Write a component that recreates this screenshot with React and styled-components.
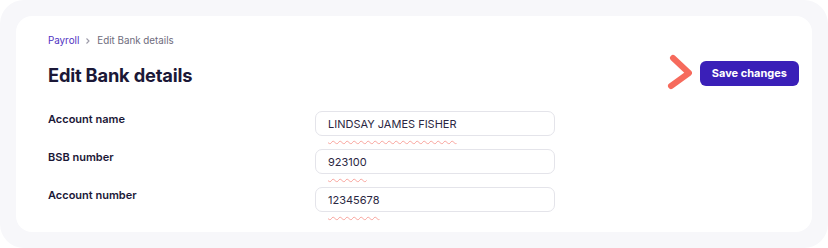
import React from 'react';
import styled, { createGlobalStyle } from 'styled-components';

const GlobalStyle = createGlobalStyle`
  html, body {
    margin: 0;
    padding: 0;
    background: #ffffff;
  }
  body {
    font-family: Inter, 'Liberation Sans', sans-serif;
    -webkit-font-smoothing: antialiased;
  }
`;

const Frame = styled.div`
  width: 828px;
  height: 248px;
  box-sizing: border-box;
  padding: 16px;
  background: #f7f7fa;
  border-radius: 24px;
`;

const Card = styled.div`
  height: 100%;
  box-sizing: border-box;
  background: #ffffff;
  border-radius: 16px;
  padding: 18px 13px 0 32px;
`;

const Breadcrumb = styled.nav`
  display: flex;
  align-items: center;
  gap: 4px;
  font-size: 9.8px;
  line-height: 14px;
  color: #6e6c7c;
`;

const Crumb = styled.span`
  color: ${(p) => (p.active ? '#4f32c2' : '#6e6c7c')};
`;

const Header = styled.div`
  display: flex;
  align-items: center;
  justify-content: space-between;
  margin-top: 12px;
  height: 26px;
`;

const Title = styled.h1`
  margin: 0;
  margin-top: 3px;
  font-size: 18.3px;
  font-weight: 700;
  letter-spacing: -0.2px;
  color: #1b1837;
`;

const Actions = styled.div`
  display: flex;
  align-items: center;
  gap: 8px;
`;

const SaveButton = styled.button`
  height: 25px;
  padding: 0 12px;
  border: none;
  border-radius: 6px;
  background: #3a1fb8;
  color: #ffffff;
  font-family: Inter, 'Liberation Sans', sans-serif;
  font-size: 11px;
  font-weight: 700;
  cursor: pointer;
`;

const Form = styled.div`
  display: flex;
  flex-direction: column;
  gap: 13px;
  margin-top: 25px;
`;

const Row = styled.div`
  display: grid;
  grid-template-columns: 267px 240px;
  align-items: start;
`;

const Label = styled.label`
  padding-top: 1px;
  font-size: 11px;
  line-height: 15px;
  font-weight: 600;
  color: #1b1837;
`;

const Field = styled.div`
  height: 25px;
  box-sizing: border-box;
  display: flex;
  align-items: center;
  padding: 0 12px;
  border: 1px solid #e4e4ea;
  border-radius: 7px;
  font-size: 11px;
  color: #2a2742;
`;

const Value = styled.span`
  text-decoration: underline wavy rgba(244, 98, 86, 0.55);
  text-decoration-thickness: 1px;
  text-underline-offset: 12px;
`;

const Arrow = () => (
  <svg width="26" height="38" viewBox="0 0 26 38">
    <path
      d="M7 4 L23 19 L5 32"
      fill="none"
      stroke="#f66a5c"
      strokeWidth="6"
      strokeLinecap="round"
      strokeLinejoin="round"
    />
  </svg>
);

const ChevronRight = () => (
  <svg width="10" height="8" viewBox="0 0 10 8">
    <path d="M3.5 1.5 L6 4 L3.5 6.5" fill="none" stroke="#9c9aa8" strokeWidth="1.1" />
  </svg>
);

const fields = [
  { label: 'Account name', value: 'LINDSAY JAMES FISHER' },
  { label: 'BSB number', value: '923100' },
  { label: 'Account number', value: '12345678' },
];

export default function App() {
  return (
    <>
      <GlobalStyle />
      <Frame>
        <Card>
          <Breadcrumb>
            <Crumb active>Payroll</Crumb>
            <ChevronRight />
            <Crumb>Edit Bank details</Crumb>
          </Breadcrumb>
          <Header>
            <Title>Edit Bank details</Title>
            <Actions>
              <Arrow />
              <SaveButton>Save changes</SaveButton>
            </Actions>
          </Header>
          <Form>
            {fields.map((f) => (
              <Row key={f.label}>
                <Label>{f.label}</Label>
                <Field>
                  <Value>{f.value}</Value>
                </Field>
              </Row>
            ))}
          </Form>
        </Card>
      </Frame>
    </>
  );
}
